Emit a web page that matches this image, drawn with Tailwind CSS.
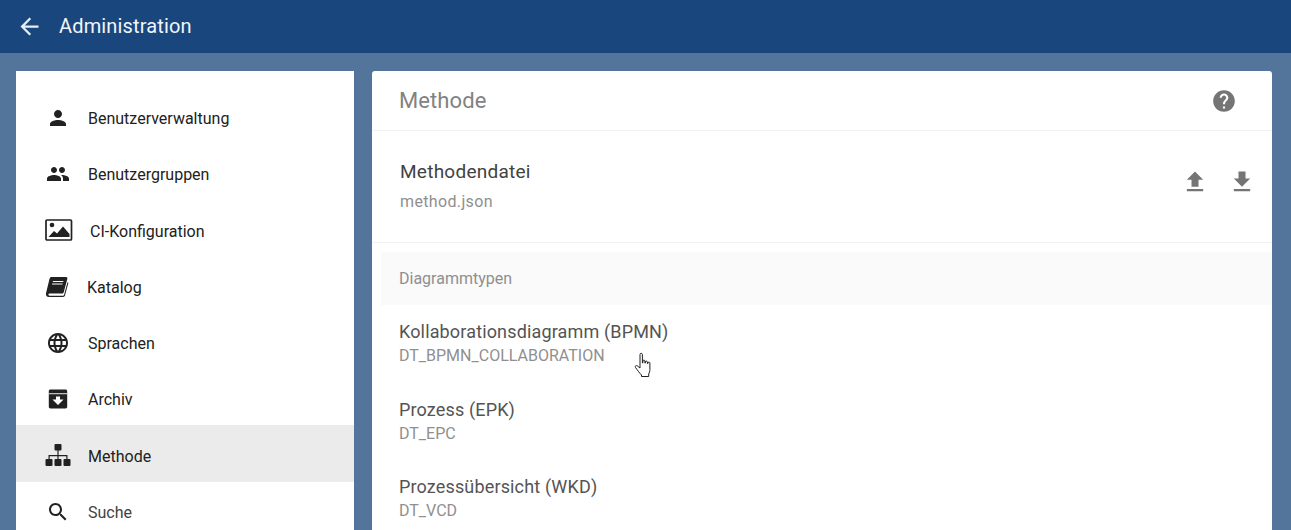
<!DOCTYPE html>
<html lang="en">
<head>
    <meta charset="UTF-8">
    <title>Administration</title>
    <script src="https://cdn.jsdelivr.net/npm/@tailwindcss/browser@4"></script>
</head>
<body class="relative h-[530px] overflow-hidden bg-[#53749b] font-['Roboto',sans-serif]">

    <!-- top bar -->
    <header class="flex h-[53px] items-center bg-[#19477d] pl-[16px] text-white">
        <svg class="h-[27px] w-[27px]" viewBox="0 0 24 24" fill="#e8edf3"><path d="M20 11H7.83l5.59-5.59L12 4l-8 8 8 8 1.41-1.41L7.83 13H20v-2z"/></svg>
        <h1 class="mb-[1px] ml-[16px] text-[20px] tracking-[0.15px] text-[#f2f5f8]">Administration</h1>
    </header>

    <div class="flex gap-[18px] px-[16px] pt-[18px]">
        <!-- sidebar -->
        <nav class="h-[460px] w-[338px] shrink-0 bg-white pt-[16px] text-[16px] text-[#212121]">
            <a class="flex h-[56.3px] items-center pl-[30px] pt-[5px]">
                <svg class="h-6 w-6" viewBox="0 0 24 24" fill="#212121"><path d="M12 12c2.21 0 4-1.79 4-4s-1.79-4-4-4-4 1.79-4 4 1.79 4 4 4zm0 2c-2.67 0-8 1.34-8 4v2h16v-2c0-2.66-5.33-4-8-4z"/></svg>
                <span class="ml-[18px] pt-[2px]">Benutzerverwaltung</span>
            </a>
            <a class="flex h-[56.3px] items-center pl-[30px] pt-[5px]">
                <svg class="h-6 w-6" viewBox="0 0 24 24" fill="#212121"><path d="M16 11c1.66 0 2.99-1.34 2.99-3S17.66 5 16 5c-1.66 0-3 1.34-3 3s1.34 3 3 3zm-8 0c1.66 0 2.99-1.34 2.99-3S9.66 5 8 5C6.34 5 5 6.34 5 8s1.34 3 3 3zm0 2c-2.33 0-7 1.17-7 3.5V19h14v-2.5c0-2.33-4.67-3.5-7-3.5zm8 0c-.29 0-.62.02-.97.05 1.16.84 1.97 1.97 1.97 3.45V19h6v-2.5c0-2.33-4.67-3.5-7-3.5z"/></svg>
                <span class="ml-[18px] pt-[2px]">Benutzergruppen</span>
            </a>
            <a class="flex h-[56.3px] items-center pl-[29px] pt-[5px]">
                <svg class="h-[22px] w-[28px]" viewBox="0 0 28 22" fill="#212121"><rect x="1" y="1" width="25.5" height="20" rx="1" fill="none" stroke="#212121" stroke-width="1.7"/><circle cx="7" cy="6" r="2.3"/><path d="M3.5 18l5.5-6 3 2.5 6-7 6.5 7.5V18z"/></svg>
                <span class="ml-[17px] pt-[4px]">CI-Konfiguration</span>
            </a>
            <a class="flex h-[56.3px] items-center pl-[29px] pt-[5px]">
                <svg class="h-[22px] w-[24px]" viewBox="0 0 24 22" fill="#212121"><path d="M6.5 1H21c1.2 0 1.6.8 1.3 1.9l-3.5 13c-.3 1.1-1 1.6-2 1.6H4.5c-1.4 0-1.6 2.2 0 2.2H18c.6 0 1-.4 1.1-.9l3.4-12.5.9.5-3.4 12.8c-.2.9-1 1.4-1.9 1.4H4C1.8 21 .5 19.200 1 17.200L4.600 2.600C4.900 1.600 5.500 1 6.500 1z"/><path d="M8 5h10.500l-.3 1.100H7.700zM7.200 7.500h10.500l-.3 1.100H6.900z" fill="#fff"/></svg>
                <span class="ml-[18px] pt-[2px]">Katalog</span>
            </a>
            <a class="flex h-[56.3px] items-center pl-[30px] pt-[5px]">
                <svg class="h-6 w-6" viewBox="0 0 24 24" fill="#212121"><path d="M11.99 2C6.47 2 2 6.48 2 12s4.47 10 9.99 10C17.52 22 22 17.52 22 12S17.52 2 11.99 2zm6.93 6h-2.95c-.32-1.25-.78-2.45-1.38-3.56 1.84.63 3.37 1.91 4.33 3.56zM12 4.040c.83 1.200 1.480 2.530 1.910 3.960h-3.820c.43-1.430 1.080-2.760 1.910-3.960zM4.260 14C4.100 13.360 4 12.690 4 12s.1-1.360.26-2h3.380c-.08.66-.14 1.320-.14 2 0 .68.06 1.340.14 2H4.260zm.82 2h2.950c.32 1.250.78 2.450 1.380 3.560-1.840-.63-3.370-1.900-4.330-3.560zm2.950-8H5.080c.96-1.660 2.490-2.930 4.330-3.560C8.810 5.550 8.350 6.750 8.030 8zM12 19.960c-.83-1.200-1.480-2.530-1.910-3.960h3.820c-.43 1.430-1.080 2.760-1.910 3.960zM14.340 14H9.660c-.09-.66-.16-1.320-.16-2 0-.68.07-1.350.16-2h4.680c.09.65.16 1.320.16 2 0 .68-.07 1.340-.16 2zm.25 5.560c.6-1.110 1.060-2.310 1.380-3.560h2.950c-.96 1.650-2.490 2.930-4.330 3.560zM16.360 14c.08-.66.14-1.320.14-2 0-.68-.06-1.340-.14-2h3.380c.16.64.26 1.310.26 2s-.1 1.360-.26 2h-3.380z"/></svg>
                <span class="ml-[18px] pt-[2px]">Sprachen</span>
            </a>
            <a class="flex h-[56.3px] items-center pl-[30px] pt-[5px]">
                <svg class="h-6 w-6" viewBox="0 0 24 24" fill="#212121"><path d="M4.500 2.500h15c1 0 1.700.7 1.700 1.700v15.600c0 1-.8 1.700-1.700 1.700h-15c-1 0-1.700-.7-1.700-1.700V4.200c0-1 .7-1.700 1.700-1.700z"/><path d="M3 6.300h18v.9H3z" fill="#fff"/><path d="M10 9.500h4v3h3.500L12 18l-5.500-5.500H10z" fill="#fff"/></svg>
                <span class="ml-[18px] pt-[2px]">Archiv</span>
            </a>
            <a class="flex h-[57px] items-center bg-[#ebebeb] pl-[29px] pt-[5px]">
                <svg class="h-[26px] w-[26px]" viewBox="0 0 26 26" fill="#212121"><rect x="9.500" y="1" width="7" height="6.500" rx="1"/><path d="M12.400 7h1.200v5h8.900v4h-1.200v-2.800h-7.700V16h-1.200v-2.800H4.700V16H3.500v-4h8.900z"/><rect x="0.500" y="16" width="7" height="7" rx="1"/><rect x="9.500" y="16" width="7" height="7" rx="1"/><rect x="18.500" y="16" width="7" height="7" rx="1"/></svg>
                <span class="ml-[17px] pt-[2px]">Methode</span>
            </a>
            <a class="flex h-[56.3px] items-center pl-[30px] pt-[5px] text-[#424242]">
                <svg class="h-6 w-6" viewBox="0 0 24 24" fill="#212121"><path d="M15.500 14h-.79l-.28-.27C15.410 12.590 16 11.110 16 9.500 16 5.910 13.090 3 9.500 3S3 5.910 3 9.500 5.910 16 9.500 16c1.610 0 3.090-.59 4.230-1.570l.27.28v.79l5 4.990L20.490 19l-4.990-5zm-6 0C7.010 14 5 11.990 5 9.500S7.010 5 9.500 5 14 7.010 14 9.500 11.990 14 9.500 14z"/></svg>
                <span class="ml-[18px] pt-[2px]">Suche</span>
            </a>
        </nav>

        <!-- main card -->
        <main class="h-[460px] w-[900px] shrink-0 rounded-t-[3px] bg-white">
            <div class="flex h-[60px] items-center justify-between border-b border-[#f2f2f2] pl-[27px] pr-[35px]">
                <h2 class="text-[22px] tracking-[0.1px] text-[#828282]">Methode</h2>
                <svg class="h-[26px] w-[26px]" viewBox="0 0 24 24" fill="#757575"><path d="M12 2C6.480 2 2 6.480 2 12s4.480 10 10 10 10-4.480 10-10S17.520 2 12 2zm1 17h-2v-2h2v2zm2.070-7.750l-.9.920C13.450 12.900 13 13.500 13 15h-2v-.5c0-1.100.45-2.100 1.170-2.830l1.240-1.260c.37-.36.59-.86.59-1.410 0-1.100-.9-2-2-2s-2 .9-2 2H8c0-2.210 1.790-4 4-4s4 1.790 4 4c0 .88-.36 1.680-.93 2.250z"/></svg>
            </div>
            <div class="flex h-[112px] items-start justify-between border-b border-[#f2f2f2] pl-[28px] pr-[16px] pt-[29px]">
                <div>
                    <div class="text-[19px] leading-[23px] tracking-[0.25px] text-[#424242]">Methodendatei</div>
                    <div class="mt-[9px] text-[16px] leading-[20px] tracking-[0.35px] text-[#8f8f8f]">method.json</div>
                </div>
                <div class="mt-[8px] flex gap-[19px]">
                    <svg class="h-[28px] w-[28px]" viewBox="0 0 24 24" fill="#757575"><path d="M9 16h6v-6h4l-7-7-7 7h4zm-4 2h14v2H5z"/></svg>
                    <svg class="h-[28px] w-[28px]" viewBox="0 0 24 24" fill="#757575"><path d="M19 9h-4V3H9v6H5l7 7 7-7zM5 18v2h14v-2H5z"/></svg>
                </div>
            </div>
            <div class="ml-[9px] mt-[9px] flex h-[53px] items-center bg-[#fafafa] pl-[18px] text-[16px] text-[#8f8f8f]">Diagrammtypen</div>
            <div class="pl-[27px]">
                <div class="h-[77.500px] pt-[15px]">
                    <div class="text-[18px] leading-[23px] tracking-[0.15px] text-[#545454]">Kollaborationsdiagramm (BPMN)</div>
                    <div class="mt-[3px] text-[16px] leading-[20px] text-[#8f8f8f]">DT_BPMN_COLLABORATION</div>
                </div>
                <div class="h-[77.500px] pt-[15px]">
                    <div class="text-[18px] leading-[23px] tracking-[0.15px] text-[#545454]">Prozess (EPK)</div>
                    <div class="mt-[3px] text-[16px] leading-[20px] text-[#8f8f8f]">DT_EPC</div>
                </div>
                <div class="h-[77.500px] pt-[15px]">
                    <div class="text-[18px] leading-[23px] tracking-[0.15px] text-[#545454]">Prozessübersicht (WKD)</div>
                    <div class="mt-[3px] text-[16px] leading-[20px] text-[#8f8f8f]">DT_VCD</div>
                </div>
            </div>
        </main>
    </div>

    <!-- mouse pointer over the list -->
    <svg class="absolute left-[634px] top-[352px] h-[26px] w-[20px]" viewBox="0 0 20 26" fill="#fff" stroke="#222" stroke-width="1" stroke-linejoin="round"><path d="M6 2.500c0-1.600 2.400-1.600 2.400 0V11l.5-.1V9c0-1.200 2-1.200 2 0v2l.5.1V10c0-1.200 2-1.200 2 0v1.500l.5.1V11c0-1.200 2-1.200 2 0v6.500c0 2-.5 3-1.200 4.500v2.500H7.500V23C5.500 21 3 17.500 1.500 15.500.7 14.300 2 13 3.200 13.800L6 16z"/></svg>

</body>
</html>
